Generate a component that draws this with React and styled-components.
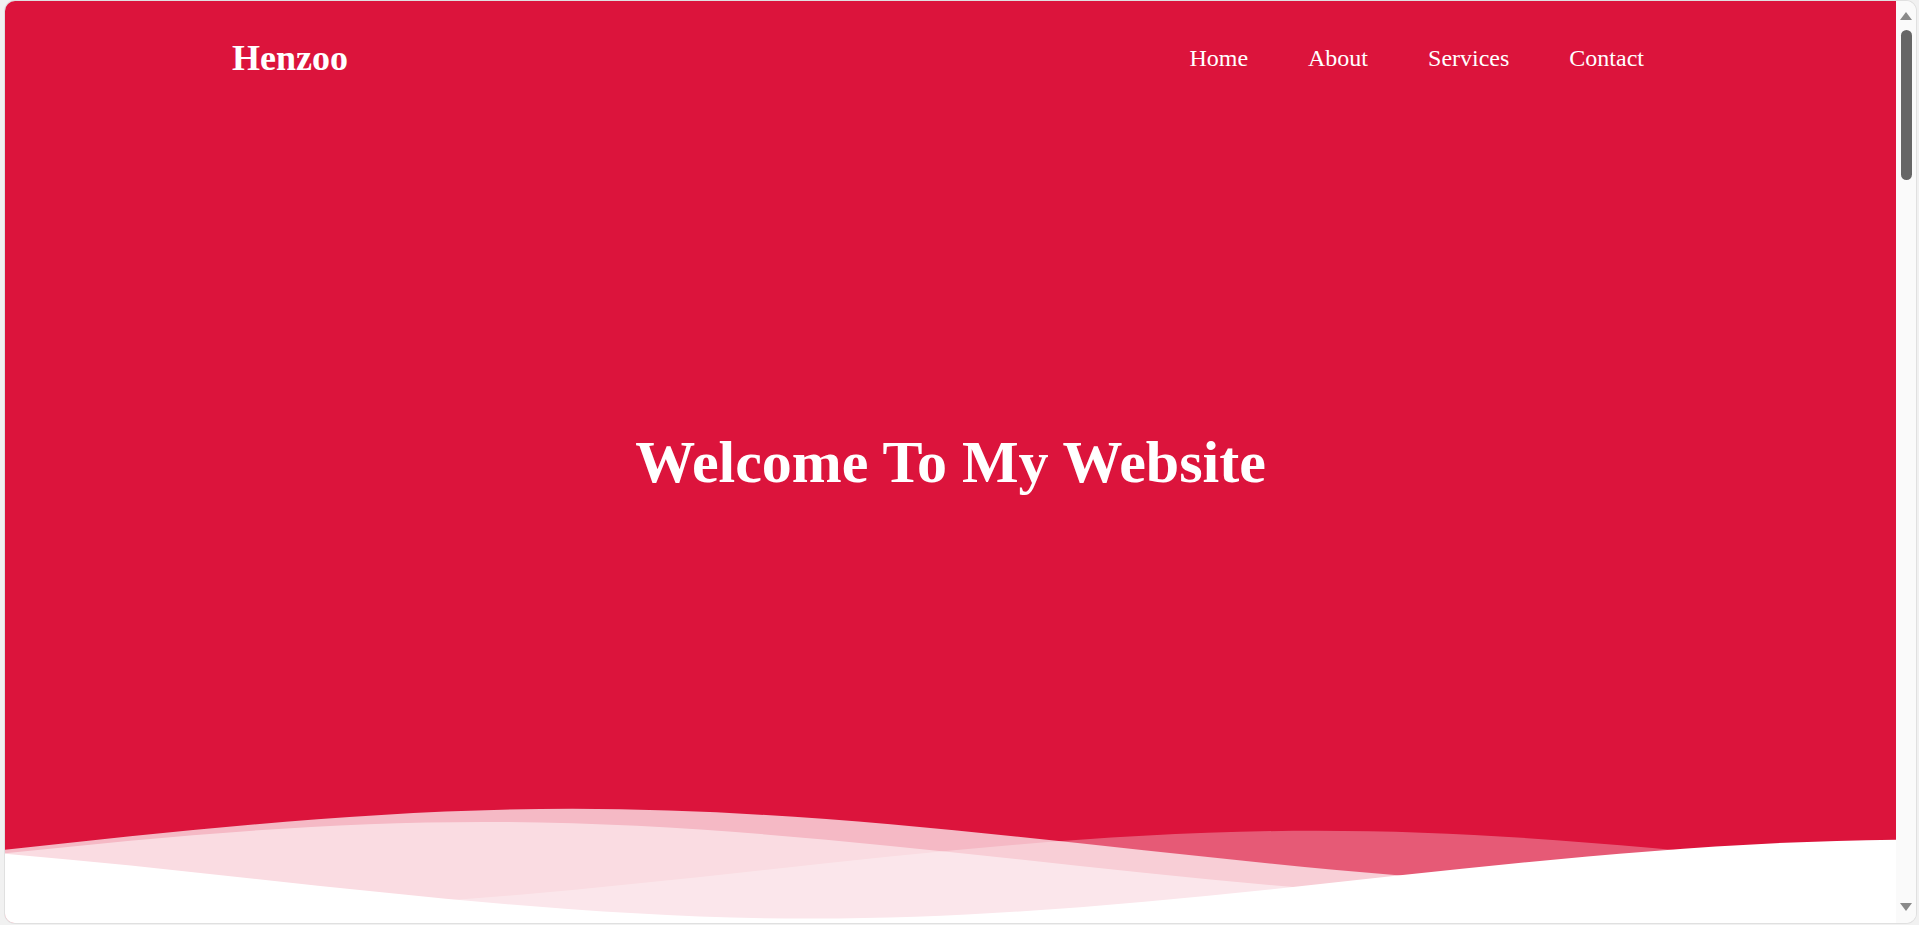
import React from "react";
import styled, { createGlobalStyle } from "styled-components";

const GlobalStyle = createGlobalStyle`
  * {
    box-sizing: border-box;
  }
  html,
  body {
    margin: 0;
    height: 100%;
  }
  body {
    background: #f1f1f1;
    font-family: "Liberation Serif", "Times New Roman", serif;
    overflow: hidden;
  }
  #root {
    height: 100%;
  }
`;

const Frame = styled.div`
  height: 100%;
  padding: 1px 3px 2px 5px;
  display: flex;
`;

const Window = styled.div`
  flex: 1;
  display: flex;
  border-radius: 10px;
  overflow: hidden;
  background: #fff;
  box-shadow: 0 0 0 1px #e0e0e0;
`;

const Viewport = styled.main`
  flex: 1;
  overflow: hidden;
`;

const Hero = styled.section`
  height: 100%;
  background: crimson;
  display: grid;
  grid-template: 1fr / 1fr;

  > * {
    grid-area: 1 / 1;
  }
`;

const Header = styled.header`
  align-self: start;
  height: 114px;
  padding: 0 252px 0 227px;
  display: flex;
  align-items: center;
  justify-content: space-between;
`;

const Logo = styled.a`
  font-size: 36px;
  font-weight: 700;
  color: #fff;
  text-decoration: none;
`;

const NavList = styled.ul`
  display: flex;
  gap: 60px;
  list-style: none;
  margin: 0;
  padding: 0;
`;

const NavLink = styled.a`
  font-size: 24px;
  color: #fff;
  text-decoration: none;
`;

const Title = styled.h1`
  align-self: center;
  justify-self: center;
  margin: 0;
  font-size: 60px;
  font-weight: 700;
  color: #fff;
`;

const Waves = styled.svg`
  align-self: end;
  display: block;
  width: 100%;
  height: 123px;
`;

const ScrollTrack = styled.div`
  width: 20px;
  background: #fafafa;
  display: flex;
  flex-direction: column;
  align-items: center;
  padding: 11px 0 12px;
`;

const Arrow = styled.span`
  width: 0;
  height: 0;
  border-left: 6px solid transparent;
  border-right: 6px solid transparent;
  ${(p) =>
    p.$down
      ? "border-top: 8px solid #8a8a8a; margin-top: auto;"
      : "border-bottom: 8px solid #8a8a8a;"}
`;

const Thumb = styled.div`
  width: 11px;
  height: 150px;
  margin-top: 10px;
  border-radius: 6px;
  background: #666;
`;

const links = ["Home", "About", "Services", "Contact"];

// layered waves: [x offset, y offset, fill]
const waveLayers = [
  [117, 0, "rgba(255,255,255,0.7)"],
  [110, 3, "rgba(255,255,255,0.5)"],
  [0, 5, "rgba(255,255,255,0.3)"],
  [48, 7, "#fff"],
];

const App = () => {
  return (
    <>
      <GlobalStyle />
      <Frame>
        <Window>
          <Viewport>
            <Hero>
              <Header>
                <Logo href="#">Henzoo</Logo>
                <NavList>
                  {links.map((l) => (
                    <li key={l}>
                      <NavLink href="#">{l}</NavLink>
                    </li>
                  ))}
                </NavList>
              </Header>
              <Title>Welcome To My Website</Title>
              <Waves viewBox="0 24 150 28" preserveAspectRatio="none">
                <defs>
                  <path
                    id="gentle-wave"
                    d="M-160 44c30 0 58-18 88-18s 58 18 88 18 58-18 88-18 58 18 88 18 v44h-352z"
                  />
                </defs>
                {waveLayers.map(([x, y, fill], i) => (
                  <use key={i} href="#gentle-wave" x={x} y={y} fill={fill} />
                ))}
              </Waves>
            </Hero>
          </Viewport>
          <ScrollTrack>
            <Arrow />
            <Thumb />
            <Arrow $down />
          </ScrollTrack>
        </Window>
      </Frame>
    </>
  );
};

export default App;
